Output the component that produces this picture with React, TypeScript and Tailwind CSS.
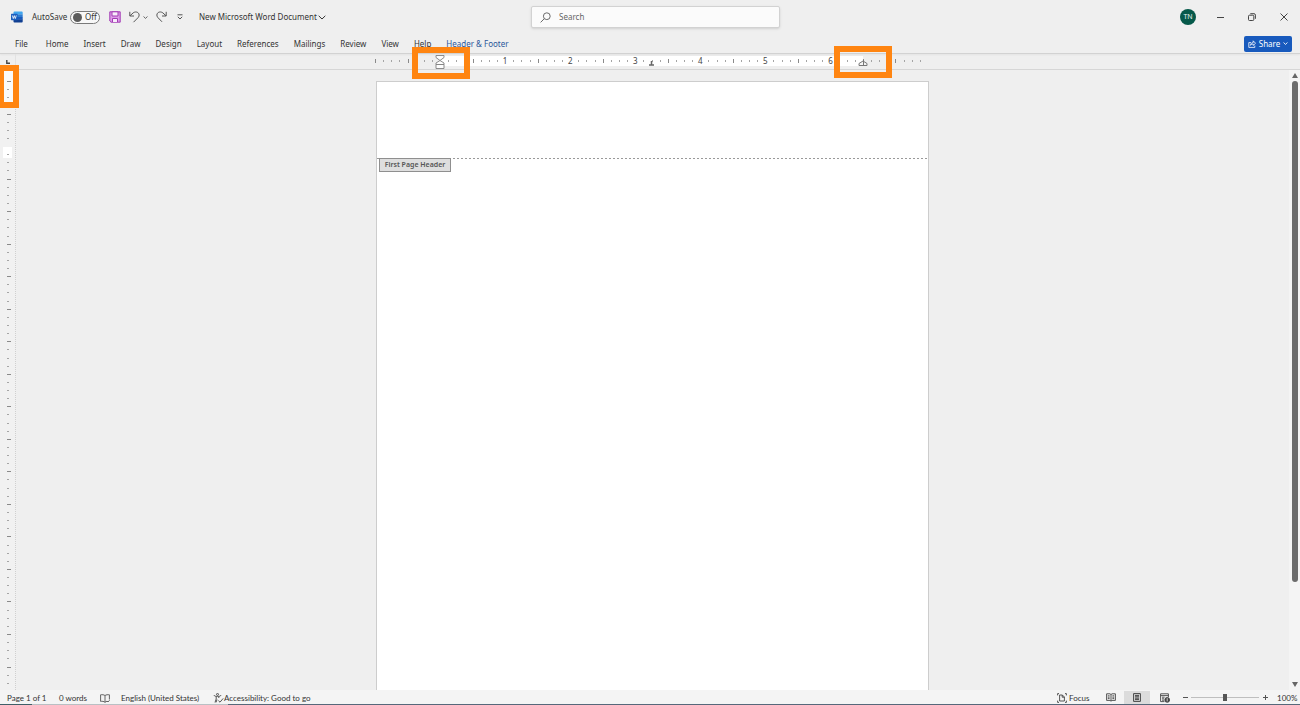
import React from "react";
import clsx from "clsx";

const TABS = [
  "File",
  "Home",
  "Insert",
  "Draw",
  "Design",
  "Layout",
  "References",
  "Mailings",
  "Review",
  "View",
  "Help",
  "Header & Footer",
];

// ruler scale: one inch on screen, split in eighths
const INCH = 65.06;
const EIGHTH = INCH / 8;

const ChevronDown: React.FC<{ className?: string }> = ({ className }) => (
  <svg viewBox="0 0 8 5" className={className} fill="none" stroke="currentColor" aria-hidden="true">
    <path d="M0.7 0.8 L4 4 L7.3 0.8" />
  </svg>
);

const WordLogo = () => (
  <svg viewBox="0 0 12 12" className="h-3 w-3" aria-hidden="true">
    <path d="M2.5 1.6 a1 1 0 0 1 1 -1 H10.8 a.9 .9 0 0 1 .9 .9 V3.6 H2.5 Z" fill="#41a5ee" />
    <path d="M2.5 3.4 h9.2 v2.8 h-9.2 z" fill="#2b7cd3" />
    <path d="M2.5 6 h9.2 v2.8 h-9.2 z" fill="#185abd" />
    <path d="M2.5 8.6 h9.2 v1.9 a.9 .9 0 0 1 -.9 .9 H3.4 a.9 .9 0 0 1 -.9 -.9 z" fill="#103f91" />
    <rect x="0" y="2.8" width="6.6" height="6.4" rx="0.6" fill="#1a5dbe" />
    <path d="M1.3 4.4 L2.3 7.6 L3.3 4.6 L4.3 7.6 L5.3 4.4" fill="none" stroke="#fff" strokeWidth="0.8" />
  </svg>
);

const TitleBar = () => (
  <div className="grid h-[34px] grid-cols-[1fr_249px_1fr] items-center pl-[11px]">
    <div className="flex items-center">
      <WordLogo />
      <span className="ml-[9px] w-[34px] whitespace-nowrap">AutoSave</span>
      <button
        role="switch"
        aria-checked="false"
        aria-label="AutoSave"
        className="ml-1 flex h-[13px] w-[30px] items-center rounded-full border border-[#7a7a7a] bg-[#f8f8f8] pl-[2px]"
      >
        <span className="h-[9px] w-[9px] rounded-full bg-[#5c5c5c]" />
        <span className="ml-[3px]">Off</span>
      </button>
      <button aria-label="Save" className="ml-[9px]">
        <svg viewBox="0 0 12 12" className="h-3 w-3" fill="none" stroke="#a23bb4">
          <path d="M0.8 0.8 H11.2 V11.2 H2 L0.8 10 Z" fill="#dd9be8" />
          <path d="M3 0.8 H9 V5 H3 Z" fill="#f8ecfa" />
          <path d="M3.5 11 V7.5 H8.5 V11" fill="#f8ecfa" />
        </svg>
      </button>
      <button aria-label="Undo" className="ml-2">
        <svg viewBox="0 0 11 12" className="h-3 w-[11px]" fill="none" stroke="#555">
          <path d="M0.8 0.8 V5 H5" />
          <path d="M1 4.8 L4 2 C6 0.3 9 0.8 9.9 2.9 C10.4 4.4 10 5.6 9 6.7 L4.5 11.2" />
        </svg>
      </button>
      <button aria-label="Undo history" className="ml-[3px] text-[#555]">
        <ChevronDown className="h-[3px] w-[5px] stroke-[1.5]" />
      </button>
      <button aria-label="Redo" className="ml-2">
        <svg viewBox="0 0 11 12" className="h-3 w-[11px]" fill="none" stroke="#555">
          <path d="M10.2 0.8 V5 H6" />
          <path d="M10 4.8 L7 2 C5 0.3 2 0.8 1.1 2.9 C0.6 4.4 1 5.6 2 6.7 L6 10.8" />
        </svg>
      </button>
      <button aria-label="Customize Quick Access Toolbar" className="ml-[10px]">
        <svg viewBox="0 0 6 6" className="h-[6px] w-[6px]" fill="none" stroke="#555">
          <path d="M0.5 0.8 H5.5 M0.8 2.8 L3 5 L5.2 2.8" />
        </svg>
      </button>
      <button className="ml-4 flex items-center gap-px whitespace-nowrap">
        New Microsoft Word Document
        <ChevronDown className="h-[5px] w-2" />
      </button>
    </div>

    <label className="flex h-[22px] items-center rounded-xs border border-[#d2d2d2] bg-[#fbfbfb] pl-2 shadow-sm">
      <svg viewBox="0 0 11 11" className="h-[11px] w-[11px]" fill="none" stroke="#6b6b6b">
        <circle cx="6.8" cy="4.2" r="3.4" />
        <path d="M4.4 6.6 L0.6 10.4" />
      </svg>
      <input
        type="text"
        aria-label="Search"
        placeholder="Search"
        className="ml-2 min-w-0 flex-1 bg-transparent outline-none placeholder:text-[#666]"
      />
    </label>

    <div className="flex items-center justify-end">
      <button
        aria-label="Account"
        className="mr-2 flex h-4 w-4 items-center justify-center rounded-full bg-[#06594a] text-[7px] text-[#e4f3ef]"
      >
        TN
      </button>
      <button aria-label="Minimize" className="flex w-8 justify-center">
        <span className="h-px w-[7px] bg-[#444]" />
      </button>
      <button aria-label="Restore" className="flex w-8 justify-center">
        <svg viewBox="0 0 8 8" className="h-2 w-2" fill="none" stroke="#444">
          <rect x="0.5" y="2.2" width="5.3" height="5.3" rx="1" />
          <path d="M2.3 0.7 H6 A1.4 1.4 0 0 1 7.4 2.1 V5.8" />
        </svg>
      </button>
      <button aria-label="Close" className="flex w-8 justify-center">
        <svg viewBox="0 0 8 8" className="h-2 w-2" fill="none" stroke="#444">
          <path d="M0.5 0.5 L7.5 7.5 M7.5 0.5 L0.5 7.5" />
        </svg>
      </button>
    </div>
  </div>
);

const RibbonTabs = () => (
  <div className="flex h-5 items-center justify-between border-b border-[#d2d2d2] pr-2 pl-2 shadow-xs">
    <nav className="flex items-center gap-px">
      {TABS.map((t, i) => (
        <button
          key={t}
          className={clsx(
            "px-[7px] whitespace-nowrap",
            i === 0 && "mr-[3px]",
            t === "Header & Footer" && "text-[#2b579a]"
          )}
        >
          {t}
        </button>
      ))}
    </nav>
    <button className="flex h-4 w-12 items-center justify-center gap-[3px] rounded-xs bg-[#185abd] text-white">
      <svg viewBox="0 0 8 8" className="h-2 w-2" fill="none" stroke="currentColor" strokeWidth="0.8">
        <path d="M3 2.6 H0.8 V7.4 H6.8 V5.6" />
        <path d="M2.4 5.4 C2.6 3.4 3.8 2.6 5.2 2.6 V0.8 L7.6 3.3 L5.2 5.4 V4 C4 4 3.2 4.3 2.4 5.4 Z" />
      </svg>
      Share
      <ChevronDown className="h-[3px] w-[5px] stroke-[1.5]" />
    </button>
  </div>
);

const Highlight: React.FC<{ className: string }> = ({ className }) => (
  <div className={clsx("pointer-events-none absolute z-10 border-[6px] border-[#ff8511]", className)} />
);

const HorizontalRuler = () => {
  const ticks = Array.from({ length: 68 }, (_, i) => i);
  return (
    <div className="flex h-4 border-b border-[#d6d6d6]">
      <div className="flex w-4 items-center justify-center border-r border-[#e2e2e2]">
        <svg viewBox="0 0 4 4" className="h-1 w-1" fill="none" stroke="#444" strokeWidth="1.4">
          <path d="M0.8 0 V3.2 H4" />
        </svg>
      </div>
      <div className="flex flex-1 justify-center">
        <div className="relative w-[553px]">
          <svg viewBox="0 0 553 15" className="h-[15px] w-full overflow-visible">
            <rect x="64" y="2" width="423" height="10" fill="#fff" />
            {ticks.map((i) => {
              if (i === 8 || (i % 8 === 0 && i > 8 && i < 60)) return null;
              const tall = i % 4 === 0;
              return (
                <rect
                  key={i}
                  x={Math.round(i * EIGHTH) - 1}
                  y={tall ? 5 : 6}
                  width="1"
                  height={tall ? 4 : 2}
                  fill={tall ? "#8a8a8a" : "#a5a5a5"}
                />
              );
            })}
            {[1, 2, 3, 4, 5, 6].map((n) => (
              <text
                key={n}
                x={(n + 1) * INCH - 1}
                y="10"
                textAnchor="middle"
                fontSize="8"
                fill="#444"
              >
                {n}
              </text>
            ))}
            {/* first line + hanging + left indent */}
            <g fill="#fdfdfd" stroke="#808080" strokeWidth="0.9">
              <path d="M60 1.5 H68 V3.5 L64 6.5 L60 3.5 Z" />
              <path d="M60 10.5 V9 L64 6.5 L68 9 V10.5 Z" />
              <path d="M60 10.5 H68 V14.5 H60 Z" />
            </g>
            {/* centre tab stop and right indent */}
            <path d="M275.5 7 V11 M273 11 H278" fill="none" stroke="#666" strokeWidth="1.5" />
            <path d="M483 11.5 V9.5 L487 7 L491 9.5 V11.5 Z" fill="#f5f5f5" stroke="#777" />
            <path d="M487.5 6 V11" stroke="#777" />
          </svg>
          <Highlight className="-top-[7px] left-9 h-8 w-[58px]" />
          <Highlight className="-top-2 left-[458px] h-8 w-[58px]" />
        </div>
      </div>
      <div className="w-[11px]" />
    </div>
  );
};

const VerticalRuler = () => {
  const ticks = Array.from({ length: 160 }, (_, i) => i);
  return (
    <div className="relative w-4 border-r border-dotted border-[#cfcfcf] bg-[#f1f1f1]">
      <div className="absolute inset-0 overflow-hidden">
        <svg className="h-full w-full">
          <rect x="4" y="1" width="9" height="31" fill="#fafafa" />
          {ticks.map((i) => {
            if (i === 8) return null;
            const wide = i % 4 === 0;
            return (
              <rect
                key={i}
                x={7}
                y={Math.round(11 + i * EIGHTH)}
                width={wide ? 4 : 2}
                height="1"
                fill={wide ? "#8a8a8a" : "#a5a5a5"}
              />
            );
          })}
          <rect x="3" y="77" width="9" height="11" fill="#fff" />
          <rect x="7" y="84" width="2" height="1" fill="#a5a5a5" />
        </svg>
      </div>
      <Highlight className="-top-[5px] left-0 h-[43px] w-[19px] border-l-4" />
    </div>
  );
};

const DocumentPage = () => (
  <main className="flex flex-1 justify-center pt-[11px]">
    <div className="w-[553px] border border-b-0 border-[#cdcdcd] bg-white">
      <div className="h-[76px]" />
      <div className="h-px bg-[repeating-linear-gradient(90deg,#999_0_2px,transparent_2px_4px)]" />
      <div className="-mt-px ml-[2px] flex h-[14px] w-[72px] items-center justify-center border border-[#8f8f8f] bg-[#dedede] text-[7px] font-semibold whitespace-nowrap text-[#555]">
        First Page Header
      </div>
    </div>
  </main>
);

const ScrollBar = () => (
  <div className="flex w-[11px] flex-col items-center bg-[#f4f4f4] py-[3px]">
    <svg viewBox="0 0 6 5" className="h-[5px] w-[6px]" fill="#666">
      <path d="M3 0 L6 5 H0 Z" />
    </svg>
    <div className="mt-[3px] flex-1">
      <div className="h-5/6 w-[6px] rounded-full bg-[#6b6b6b]" />
    </div>
    <svg viewBox="0 0 6 5" className="h-[5px] w-[6px]" fill="#666">
      <path d="M3 5 L6 0 H0 Z" />
    </svg>
  </div>
);

const StatusBar = () => (
  <footer className="font-[Lato,sans-serif] text-[8px]">
    <div className="flex h-[14px] items-center bg-[#f4f4f4] pr-1 pl-[7px] whitespace-nowrap">
      <div className="flex items-center pt-[2px]">
        <span className="w-[39px]">Page 1 of 1</span>
        <span className="ml-[13px] w-7">0 words</span>
        <svg viewBox="0 0 10 9" className="ml-[13px] h-[9px] w-[10px]" fill="none" stroke="#555" strokeWidth="0.9">
          <path d="M5 1.6 C4 0.6 2 0.6 0.6 0.8 V7.4 C2 7.2 4 7.2 5 8.4 C5.6 7.6 6.4 7.4 7 7.3 M5 1.6 C6 0.6 8 0.6 9.4 0.8 V5.5 M5 1.6 V8.2 M7 7 L8 8 L9.6 6.2" />
        </svg>
        <span className="ml-[11px] w-[79px]">English (United States)</span>
        <svg viewBox="0 0 11 10" className="ml-[13px] h-[10px] w-[11px]" fill="none" stroke="#444" strokeWidth="0.9">
          <circle cx="4.5" cy="1.4" r="1" />
          <path d="M0.8 2 C1.6 3.4 3 3.4 4.5 3.4 C6 3.4 7.4 3.4 8.2 2 M3.2 3.4 V6 L2 9.4 M5.8 3.4 V5 M4 6.6 L3 9.4" />
          <path d="M5.4 7.6 L7 9.2 L10.2 5.4" />
        </svg>
        <span>Accessibility: Good to go</span>
      </div>

      <div className="ml-auto flex h-full items-center pt-px">
        <button className="flex items-center gap-[2px]">
          <svg viewBox="0 0 10 10" className="h-[10px] w-[10px]" fill="none" stroke="#444" strokeWidth="0.9">
            <path d="M2 0.6 H0.6 V2.4 M8 0.6 H9.4 V2.4 M2 9.4 H0.6 V7.6 M8 9.4 H9.4 V7.6" />
            <path d="M2.6 2 H5.4 L7.4 4 V8 H2.6 Z M5.2 2 V4.2 H7.4" />
          </svg>
          <span className="w-5">Focus</span>
        </button>
        <button aria-label="Read Mode" className="ml-[9px] flex h-full w-[26px] items-center justify-center">
          <svg viewBox="0 0 10 9" className="h-[9px] w-[10px]" fill="none" stroke="#444" strokeWidth="0.9">
            <path d="M0.6 0.8 H4 L5 1.6 L6 0.8 H9.4 V7.4 H6 L5 8.2 L4 7.4 H0.6 Z M5 1.6 V8 M1.8 2.8 H3.6 M1.8 4.2 H3.6 M1.8 5.6 H3.6 M6.4 2.8 H8.2 M6.4 4.2 H8.2 M6.4 5.6 H8.2" />
          </svg>
        </button>
        <button
          aria-label="Print Layout"
          className="flex h-full w-[26px] items-center justify-center bg-[#dcdcdc]"
        >
          <svg viewBox="0 0 8 9" className="h-[9px] w-2" fill="none" stroke="#333" strokeWidth="0.9">
            <path d="M0.6 0.6 H7.4 V8.4 H0.6 Z M2 2.4 H6 M2 3.8 H6 M2 5.2 H6 M2 6.6 H6" />
          </svg>
        </button>
        <button aria-label="Web Layout" className="flex h-full w-[30px] items-center justify-center">
          <svg viewBox="0 0 10 10" className="h-[10px] w-[10px]" fill="none" stroke="#444" strokeWidth="0.9">
            <path d="M4.4 8.6 H0.6 V0.8 H8.4 V4 M0.6 2.6 H8.4 M2 4.2 H4.6 M2 5.8 H4 M2 7.2 H4" />
            <circle cx="7.2" cy="6.9" r="2.4" fill="#444" />
            <path d="M7.2 5.2 V8.4" stroke="#ddd" />
          </svg>
        </button>
        <button aria-label="Zoom Out" className="ml-px flex w-2 justify-center">
          <span className="h-px w-[5px] bg-[#555]" />
        </button>
        <input
          type="range"
          aria-label="Zoom"
          min="0"
          max="200"
          defaultValue="100"
          className="mx-[2px] h-[7px] w-[68px] appearance-none bg-linear-to-b from-transparent from-[43%] via-[#8a8a8a] via-[43%] to-transparent to-[57%] [&::-webkit-slider-thumb]:h-[7px] [&::-webkit-slider-thumb]:w-1 [&::-webkit-slider-thumb]:appearance-none [&::-webkit-slider-thumb]:bg-[#555]"
        />
        <button aria-label="Zoom In" className="flex w-2 justify-center">
          <svg viewBox="0 0 5 5" className="h-[5px] w-[5px]" stroke="#555">
            <path d="M0 2.5 H5 M2.5 0 V5" />
          </svg>
        </button>
        <span className="ml-2 w-[19px]">100%</span>
      </div>
    </div>
    <div className="flex h-px">
      <div className="w-8 bg-[#3f5f68]" />
      <div className="w-[196px] bg-[#b9c0c4]" />
      <div className="flex-1 bg-[#56687a]" />
    </div>
  </footer>
);

const App: React.FC = () => (
  <div className="flex min-h-screen flex-col bg-[#efefef] font-['Noto_Sans',sans-serif] text-[8px] leading-3 text-[#333]">
    <TitleBar />
    <RibbonTabs />
    <HorizontalRuler />
    <div className="flex flex-1">
      <VerticalRuler />
      <DocumentPage />
      <ScrollBar />
    </div>
    <StatusBar />
  </div>
);

export default App;
